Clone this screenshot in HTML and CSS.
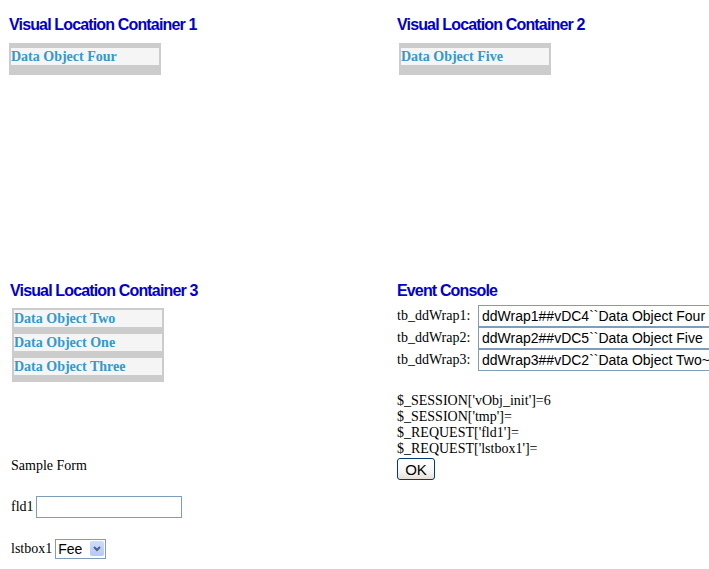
FILE: index.html
```html
<!DOCTYPE html>
<html>
<head>
<meta charset="utf-8">
<title>Visual Location Containers</title>
<link rel="stylesheet" href="styles.css">
</head>
<body>
<div class="page">
  <section class="cell cell-tl">
    <div class="heading">Visual Location Container 1</div>
    <div class="vbox vbox-single">
      <div class="item">Data Object Four</div>
    </div>
  </section>
  <section class="cell cell-tr">
    <div class="heading">Visual Location Container 2</div>
    <div class="vbox vbox-single vbox-shift">
      <div class="item">Data Object Five</div>
    </div>
  </section>
  <section class="cell cell-bl">
    <div class="heading">Visual Location Container 3</div>
    <div class="vbox vbox-multi">
      <div class="item">Data Object Two</div>
      <div class="item">Data Object One</div>
      <div class="item">Data Object Three</div>
    </div>
    <form class="sample">
      <div class="sample-title">Sample Form</div>
      <div class="frow frow-fld">
        <label for="fld1">fld1</label>
        <input id="fld1" class="txt" type="text">
      </div>
      <div class="frow frow-sel">
        <label for="lstbox1">lstbox1</label>
        <span class="selwrap">
          <select id="lstbox1" class="sel"><option>Fee</option><option>Fie</option><option>Foe</option></select>
          <span class="selarrow"><svg width="14" height="15" viewBox="0 0 14 15"><path d="M4 6 L7 9 L10 6" fill="none" stroke="#4d6185" stroke-width="2"/></svg></span>
        </span>
      </div>
    </form>
  </section>
  <section class="cell cell-br">
    <div class="heading">Event Console</div>
    <div class="console">
      <div class="crow"><span class="clabel">tb_ddWrap1:</span><input class="cinput" type="text" value="ddWrap1##vDC4``Data Object Four"></div>
      <div class="crow"><span class="clabel">tb_ddWrap2:</span><input class="cinput" type="text" value="ddWrap2##vDC5``Data Object Five"></div>
      <div class="crow"><span class="clabel">tb_ddWrap3:</span><input class="cinput" type="text" value="ddWrap3##vDC2``Data Object Two~~ddWrap3##vDC1``Data Object One"></div>
    </div>
    <div class="session">
      <div>$_SESSION['vObj_init']=6</div>
      <div>$_SESSION['tmp']=</div>
      <div>$_REQUEST['fld1']=</div>
      <div>$_REQUEST['lstbox1']=</div>
    </div>
    <button class="okbtn" type="button">OK</button>
  </section>
</div>
</body>
</html>
```

FILE: styles.css
```css
html, body {
  margin: 0;
  padding: 0;
  overflow: hidden;
  background: #ffffff;
}
body {
  font-family: "Liberation Serif", "Times New Roman", serif;
  font-size: 14px;
  color: #000000;
  width: 709px;
  height: 569px;
}
.page {
  display: grid;
  grid-template-columns: 388px 321px;
  grid-template-rows: 266px auto;
}
.cell {
  display: flex;
  flex-direction: column;
  align-items: flex-start;
  padding-top: 16px;
  min-width: 0;
}
.cell-tl { padding-left: 9px; }
.cell-tr { padding-left: 9px; }
.cell-bl { padding-left: 10px; }
.cell-br { padding-left: 9px; overflow: hidden; }

.heading {
  font-family: "Liberation Sans", Arial, sans-serif;
  font-weight: bold;
  font-size: 16px;
  letter-spacing: -0.85px;
  line-height: 18px;
  height: 18px;
  color: #0000cc;
  white-space: nowrap;
}

.vbox {
  box-sizing: border-box;
  width: 152px;
  background: #cccccc;
  display: flex;
  flex-direction: column;
}
.vbox-single {
  margin-top: 9px;
  padding: 5px 2px 10px 2px;
}
.vbox-shift { margin-left: 2px; }
.vbox-multi {
  margin-top: 8px;
  margin-left: 2px;
  padding: 2px 2px 0 2px;
}
.vbox-multi .item { margin-bottom: 7px; }
.item {
  height: 17px;
  line-height: 18px;
  background: #f5f5f5;
  color: #3399cc;
  font-family: "Liberation Serif", "Times New Roman", serif;
  font-weight: bold;
  font-size: 14px;
  white-space: nowrap;
  overflow: hidden;
}

.sample {
  margin: 76px 0 0 1px;
  display: flex;
  flex-direction: column;
}
.sample-title {
  line-height: 16px;
  height: 16px;
}
.frow {
  display: flex;
  align-items: center;
  gap: 3px;
  line-height: 16px;
}
.frow-fld { margin-top: 22px; height: 22px; gap: 2px; }
.frow-sel { margin-top: 21px; height: 20px; }
.txt {
  box-sizing: border-box;
  width: 146px;
  height: 22px;
  border: 1px solid #7f9db9;
  margin: 0;
  padding: 0 3px;
  font-family: "Liberation Sans", Arial, sans-serif;
  font-size: 14px;
  background: #ffffff;
  outline: none;
}
.selwrap {
  position: relative;
  display: inline-block;
  width: 51px;
  height: 20px;
}
.sel {
  -webkit-appearance: none;
  appearance: none;
  box-sizing: border-box;
  width: 51px;
  height: 20px;
  margin: 0;
  border: 1px solid #7f9db9;
  border-radius: 0;
  padding: 0 0 0 2px;
  background: #ffffff;
  font-family: "Liberation Sans", Arial, sans-serif;
  font-size: 14px;
  color: #000000;
  line-height: 18px;
}
.selarrow {
  position: absolute;
  top: 2px;
  right: 2px;
  width: 14px;
  height: 15px;
  background: linear-gradient(#cfdcfd, #b4c9f6);
  border-radius: 2px;
  pointer-events: none;
  display: flex;
}

.console {
  margin-top: 5px;
  display: flex;
  flex-direction: column;
}
.crow {
  display: flex;
  align-items: center;
  height: 22px;
}
.clabel {
  width: 81px;
  flex: none;
  line-height: 16px;
  white-space: nowrap;
}
.cinput {
  box-sizing: border-box;
  flex: none;
  width: 300px;
  height: 22px;
  margin: 0;
  border: 1px solid #7f9db9;
  padding: 0 3px;
  font-family: "Liberation Sans", Arial, sans-serif;
  font-size: 14px;
  color: #000000;
  background: #ffffff;
  outline: none;
}
.session {
  margin-top: 22px;
  line-height: 16px;
  white-space: nowrap;
}
.okbtn {
  margin-top: 1px;
  box-sizing: border-box;
  width: 38px;
  height: 22px;
  padding: 0;
  border: 1px solid #003c74;
  border-radius: 3px;
  background: linear-gradient(#ffffff 0%, #f7f7f4 60%, #e3e0d6 100%);
  font-family: "Liberation Sans", Arial, sans-serif;
  font-size: 15px;
  color: #000000;
}
```
